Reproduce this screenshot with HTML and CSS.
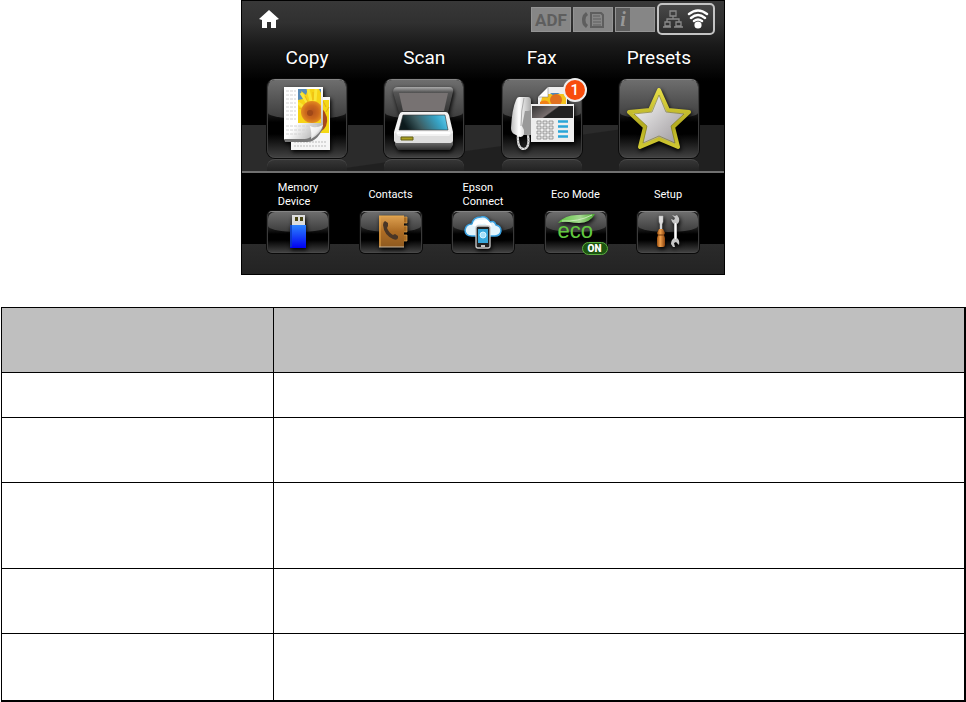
FILE: index.html
```
<!DOCTYPE html>
<html lang="en">
<head>
    <meta charset="UTF-8">
    <meta name="viewport" content="width=device-width, initial-scale=1.0">
    <title>Home Screen</title>
    <link rel="stylesheet" href="styles.css">
</head>
<body>
    <main class="screen">
        <header class="top-bar">
            <a href="#home" class="home-link" aria-label="Home">
                <svg width="22" height="20" viewBox="0 0 22 20">
                    <path d="M11 1 L21 10 L18 11 V19 H13 V13 H9 V19 H4 V11 L1 10 Z" fill="#fff"/>
                </svg>
            </a>
            <div class="status">
                <span class="status-box adf">ADF</span>
                <span class="status-box">
                    <svg width="24" height="18" viewBox="0 0 24 18" fill="none" stroke="#5e5e5e">
                        <path d="M5 1 L2 4 Q0 9 2 14 L5 17 L7 14 L5 12 Q4 9 5 6 L7 4 Z" fill="#5e5e5e" stroke="none"/>
                        <path d="M10 2 H20 L22 4 V16 H10 Z" stroke-width="2"/>
                        <path d="M12 5 H19 M12 8 H20 M12 11 H20 M12 14 H20" stroke-width="1.2"/>
                    </svg>
                </span>
                <span class="status-box info"><i>i</i></span>
                <button type="button" class="network" aria-label="Network">
                    <svg width="20" height="20" viewBox="0 0 20 20" fill="none" stroke="#8a8a8a" stroke-width="1.3">
                        <path d="M7 2 H13 V7 H7 Z M2 13 H7 V17 H2 Z M13 13 H18 V17 H13 Z M10 7 V10 M4 13 V10 H16 V13 M0 18 H8 M11 18 H20"/>
                    </svg>
                    <svg width="22" height="20" viewBox="0 0 22 20" fill="none" stroke="#fff" stroke-width="2.4" stroke-linecap="round">
                        <path d="M2 5 Q11 -2 20 5 M4 9 Q11 3 18 9 M7 12 Q11 9 15 12"/>
                        <circle cx="11" cy="16" r="3.6" fill="#fff" stroke="none"/>
                    </svg>
                </button>
            </div>
        </header>

        <nav class="main-menu">
            <div class="item">
                <label for="copy">Copy</label>
                <button type="button" class="tile" id="copy">
                    <svg width="80" height="78" viewBox="0 0 80 78">
                        <defs>
                            <linearGradient id="paper" x1="0" y1="0" x2="1" y2="1">
                                <stop offset="0.5" stop-color="#fff"/>
                                <stop offset="1" stop-color="#999"/>
                            </linearGradient>
                            <linearGradient id="curl" x1="0" y1="0" x2="1" y2="1">
                                <stop offset="0" stop-color="#fff"/>
                                <stop offset="0.5" stop-color="#eee"/>
                                <stop offset="1" stop-color="#555"/>
                            </linearGradient>
                            <radialGradient id="seeds">
                                <stop offset="0" stop-color="#b0501c"/>
                                <stop offset="0.6" stop-color="#cc681c"/>
                                <stop offset="1" stop-color="#e48c20"/>
                            </radialGradient>
                            <clipPath id="photo"><path d="M31 10 H54 V44 H31 Z"/></clipPath>
                        </defs>
                        <path d="M24 18 H63 V71 H24 Z" fill="#f6f6f6"/>
                        <path d="M42 21 H62 V54 H42 Z" fill="#f4d814"/>
                        <path d="M54 28 Q63 38 59 47 Q56 53 48 54 V28 Z" fill="#a8481a"/>
                        <path d="M56 22 L59 28 M62 28 L59 33" fill="none" stroke="#e0a818"/>
                        <path d="M27 63 H60 M27 67 H60" stroke="#bbb" stroke-dasharray="2 1"/>
                        <path d="M17 8 H56 V47 L44 61 H17 Z" fill="url(#paper)"/>
                        <path d="M19 12 H29 M19 16 H29 M19 20 H29 M19 24 H29 M19 28 H29 M19 32 H29 M19 36 H29 M19 40 H29 M19 47 H50 M19 51 H43 M19 55 H40" stroke="#d2d2d2" stroke-dasharray="3 1"/>
                        <g clip-path="url(#photo)">
                            <path d="M31 10 H54 V44 H31 Z" fill="#f6d316"/>
                            <path d="M31 10 H41 L39 16 L34 12 L36 20 L31 21 Z" fill="#5a8cb8"/>
                            <path d="M52 10 H54 V14 Z" fill="#5a8cb8"/>
                            <path d="M41 10 L44 22 M34 14 L41 25 M31 24 L38 29 M49 10 L48 22" stroke="#fae638" stroke-width="3"/>
                            <path d="M38 17 L42 25 M46 13 L46 21 M32 29 L37 31" stroke="#ecb414"/>
                            <circle cx="45" cy="33" r="11" fill="url(#seeds)"/>
                            <circle cx="43" cy="34" r="3" fill="#a04818"/>
                        </g>
                        <path d="M17 60 H38 Q44 60 56 47 V49 Q50 63 40 63 H18 Z" fill="#777"/>
                        <path d="M44 60 Q45 55 43 47 Q48 50 56 46 Q54 55 44 60 Z" fill="url(#curl)"/>
                    </svg>
                </button>
            </div>
            <div class="item">
                <label for="scan">Scan</label>
                <button type="button" class="tile" id="scan">
                    <svg width="80" height="78" viewBox="0 0 80 78">
                        <defs>
                            <linearGradient id="lid" x1="0" y1="0" x2="0" y2="1">
                                <stop offset="0" stop-color="#aaa"/>
                                <stop offset="0.2" stop-color="#555"/>
                                <stop offset="1" stop-color="#333"/>
                            </linearGradient>
                            <linearGradient id="glass" x1="0" y1="0.6" x2="1" y2="0.4">
                                <stop offset="0.1" stop-color="#0c1a1c"/>
                                <stop offset="0.4" stop-color="#3d5d62"/>
                                <stop offset="0.8" stop-color="#37a5c8"/>
                                <stop offset="1" stop-color="#5cc8ea"/>
                            </linearGradient>
                            <linearGradient id="base" x1="0" y1="0" x2="0" y2="1">
                                <stop offset="0" stop-color="#888"/>
                                <stop offset="1" stop-color="#2c2c2c"/>
                            </linearGradient>
                        </defs>
                        <path d="M14 8 H65 Q70 8 69 13 L64 34 H15 L9 13 Q9 8 14 8 Z" fill="url(#lid)"/>
                        <path d="M15 14 H64 L60 32 H19 Z" fill="#777272"/>
                        <path d="M11 60 H69 V66 L66 71 H14 L11 66 Z" fill="url(#base)"/>
                        <path d="M18 33 H62 Q64 33 65 36 L69 53 V60 Q69 64 65 64 H14 Q10 64 10 60 V53 L15 36 Q16 33 18 33 Z" fill="#f2f2f2"/>
                        <path d="M11 53 L14 57 H65 L69 53 V60 Q69 64 65 64 H14 Q10 64 10 60 Z" fill="#dedede"/>
                        <path d="M19 36 H61 L64 51 H15 Z" fill="url(#glass)" stroke="#333" stroke-width="0.6"/>
                        <path d="M13 54 H66" stroke="#fff" stroke-width="2"/>
                        <path d="M17 58 H29 V61 H17 Z" fill="#aaa022" stroke="#656018"/>
                    </svg>
                </button>
            </div>
            <div class="item">
                <label for="fax">Fax</label>
                <button type="button" class="tile" id="fax">
                    <svg width="80" height="78" viewBox="0 0 80 78">
                        <defs>
                            <linearGradient id="handset" x1="0" y1="0" x2="1" y2="0">
                                <stop offset="0" stop-color="#bbb"/>
                                <stop offset="0.4" stop-color="#fff"/>
                                <stop offset="1" stop-color="#aaa"/>
                            </linearGradient>
                            <linearGradient id="lcd" x1="0" y1="0" x2="1" y2="0.4">
                                <stop offset="0" stop-color="#333"/>
                                <stop offset="0.55" stop-color="#776e6e"/>
                                <stop offset="0.6" stop-color="#222"/>
                                <stop offset="1" stop-color="#222"/>
                            </linearGradient>
                        </defs>
                        <path d="M46 8 H65 V26 H36 V18 Z" fill="#eee"/>
                        <path d="M41 15 H64 V26 H38 Z" fill="#f3c21c"/>
                        <path d="M48 14 H58 L52 17 Z" fill="#4b86bb"/>
                        <circle cx="54" cy="21" r="6" fill="#e07020"/>
                        <path d="M38 23 Q45 19 48 26 H38 Z" fill="#f08018"/>
                        <path d="M46 8 V18 H36 Z" fill="#fff" stroke="#777" stroke-width="0.5"/>
                        <path d="M20 26 H29 V56 H18 Z" fill="#999"/>
                        <path d="M16 55 Q15 70 22 70 Q28 69 26 56" fill="none" stroke="#ddd" stroke-width="2.2"/>
                        <path d="M16 55 Q15 70 22 70 Q28 69 26 56" fill="none" stroke="#aaa" stroke-width="2.2" stroke-dasharray="1 2"/>
                        <path d="M17 18 H26 Q29 18 29 22 V29 Q29 32 26 32 H23 L20 47 L22 51 V55 Q21 58 18 58 L12 55 Q9 53 9 49 Q10 30 14 21 Q15 18 17 18 Z" fill="url(#handset)"/>
                        <path d="M22 19 Q19 31 19 47" fill="none" stroke="#aaa"/>
                        <path d="M29 25 H72 V63 H29 Z" fill="#eee"/>
                        <path d="M30 27 H71 V39 H30 Z" fill="url(#lcd)"/>
                        <g fill="#e4e4e4" stroke="#888" stroke-width="0.8">
                            <path d="M35 42 h4 v3 h-4 Z M41 42 h4 v3 h-4 Z M47 42 h4 v3 h-4 Z"/>
                            <path d="M35 47 h4 v3 h-4 Z M41 47 h4 v3 h-4 Z M47 47 h4 v3 h-4 Z"/>
                            <path d="M35 52 h4 v3 h-4 Z M41 52 h4 v3 h-4 Z M47 52 h4 v3 h-4 Z"/>
                            <path d="M35 57 h4 v3 h-4 Z M41 57 h4 v3 h-4 Z M47 57 h4 v3 h-4 Z"/>
                        </g>
                        <path d="M56 42.5 H66 M56 47.5 H66 M56 52.5 H66 M56 57.5 H66" stroke="#2aa5d8" stroke-width="2.6"/>
                    </svg>
                    <span class="badge">1</span>
                </button>
            </div>
            <div class="item">
                <label for="presets">Presets</label>
                <button type="button" class="tile" id="presets">
                    <svg width="80" height="78" viewBox="0 0 80 78">
                        <defs>
                            <linearGradient id="star" x1="0" y1="0" x2="1" y2="1">
                                <stop offset="0.2" stop-color="#eee"/>
                                <stop offset="0.8" stop-color="#a9a5a8"/>
                            </linearGradient>
                            <linearGradient id="star-edge" x1="0" y1="0" x2="0" y2="1">
                                <stop offset="0" stop-color="#e4dc48"/>
                                <stop offset="0.6" stop-color="#b4ac20"/>
                                <stop offset="1" stop-color="#cfc732"/>
                            </linearGradient>
                        </defs>
                        <path d="M40 11 L49 31 L70 33 L54 48 L59 68 L40 60 L21 68 L26 48 L10 33 L31 31 Z" fill="url(#star)" stroke="url(#star-edge)" stroke-width="4" stroke-linejoin="round"/>
                        <path d="M40 16 L47 33 L65 35 L52 47 L56 64 L40 57 L24 64 L28 47 L15 35 L33 33 Z" fill="none" stroke="#77721c" stroke-width="0.6"/>
                    </svg>
                </button>
            </div>
        </nav>

        <nav class="sub-menu">
            <div class="item">
                <label for="memory">Memory<br>Device</label>
                <button type="button" class="tile" id="memory">
                    <svg width="62" height="42" viewBox="0 0 62 42">
                        <defs>
                            <linearGradient id="usb" x1="0" y1="0" x2="0" y2="1">
                                <stop offset="0" stop-color="#2c82ff"/>
                                <stop offset="1" stop-color="#0000f0"/>
                            </linearGradient>
                        </defs>
                        <path d="M25 4 H38 V15 H25 Z" fill="#ddd"/>
                        <path d="M28 6 h3 v4 h-3 Z M33 6 h3 v4 h-3 Z" fill="#4a4614"/>
                        <path d="M23 14 H39 V37 H23 Z" fill="url(#usb)"/>
                        <path d="M24 14 V36" stroke="#0a38b8" stroke-width="1.5"/>
                    </svg>
                </button>
            </div>
            <div class="item">
                <label for="contacts">Contacts</label>
                <button type="button" class="tile" id="contacts">
                    <svg width="62" height="42" viewBox="0 0 62 42">
                        <defs>
                            <linearGradient id="book" x1="0" y1="0" x2="0" y2="1">
                                <stop offset="0" stop-color="#dda050"/>
                                <stop offset="0.5" stop-color="#ad6c24"/>
                                <stop offset="1" stop-color="#8e5a20"/>
                            </linearGradient>
                        </defs>
                        <path d="M43 6 h4 v6 h-4 Z M43 15 h4 v6 h-4 Z M43 24 h4 v6 h-4 Z" fill="#a66a22" stroke="#e0a550" stroke-width="0.7"/>
                        <path d="M19 5 H44 V36 H19 Z" fill="url(#book)"/>
                        <path d="M19 5 H44 M20 5 V36" stroke="#e9a94a"/>
                        <path d="M19 36 H44" stroke="#c9b8a0"/>
                        <path d="M25 10 L28 12 L28 15 L27 17 Q29 22 33 24 L35 23 L38 25 V27 Q37 30 33 28 Q24 24 23 14 Q23 11 25 10 Z" fill="#4a3626"/>
                    </svg>
                </button>
            </div>
            <div class="item">
                <label for="connect">Epson<br>Connect</label>
                <button type="button" class="tile" id="connect">
                    <svg width="62" height="42" viewBox="0 0 62 42">
                        <path d="M20 25 Q13 25 13 19 Q14 13 20 13 Q21 6 29 6 Q35 5 38 11 Q42 9 44 14 Q49 15 49 20 Q48 25 43 25 Z" fill="#e2f4fc" stroke="#3aa0df" stroke-width="1.5"/>
                        <path d="M22 15 Q24 10 30 11 Q36 9 38 16" fill="none" stroke="#fff" stroke-width="4"/>
                        <rect x="24" y="15" width="14" height="22" rx="2" fill="#222" stroke="#ccc" stroke-width="1.3"/>
                        <path d="M26 18 H36 V32 H26 Z" fill="#37a8dc"/>
                        <circle cx="31" cy="24" r="3" fill="#a4e0fa" stroke="#d8f4ff"/>
                        <path d="M29 35 H33" stroke="#fff" stroke-width="1.5"/>
                    </svg>
                </button>
            </div>
            <div class="item">
                <label for="eco">Eco Mode</label>
                <button type="button" class="tile" id="eco">
                    <svg width="62" height="42" viewBox="0 0 62 42">
                        <defs>
                            <linearGradient id="leaf" x1="0" y1="0" x2="1" y2="0">
                                <stop offset="0" stop-color="#5cc83c"/>
                                <stop offset="0.6" stop-color="#a4d890"/>
                                <stop offset="1" stop-color="#48a82c"/>
                            </linearGradient>
                        </defs>
                        <path d="M13 12 Q20 4 32 4 L50 3 Q45 12 34 12 Q28 12 24 11 Q18 10 13 12 Z" fill="url(#leaf)"/>
                        <path d="M17 10 Q33 11 47 4" fill="none" stroke="#d8f0cc" stroke-width="0.8"/>
                    </svg>
                    <span class="eco-text">eco</span>
                    <span class="eco-on">ON</span>
                </button>
            </div>
            <div class="item">
                <label for="setup">Setup</label>
                <button type="button" class="tile" id="setup">
                    <svg width="62" height="42" viewBox="0 0 62 42">
                        <defs>
                            <linearGradient id="handle" x1="0" y1="0" x2="1" y2="0">
                                <stop offset="0" stop-color="#9c5010"/>
                                <stop offset="0.4" stop-color="#f0a04c"/>
                                <stop offset="1" stop-color="#8a420c"/>
                            </linearGradient>
                        </defs>
                        <path d="M22 5 H26 V11 L25 13 V19 H23 V13 L22 11 Z" fill="#ddd" stroke="#bbb" stroke-width="0.5"/>
                        <path d="M22 18 H26 L28 22 L27 24 L28 27 V34 Q28 36 26 36 H22 Q20 36 20 34 V27 L21 24 L20 22 Z" fill="url(#handle)"/>
                        <path d="M21 24 H27" stroke="#6c360c"/>
                        <path d="M35 4 L38 7 L37 9 L34 8 Q35 12 37 13 V27 Q34 29 34 33 L36 36 H38 L37 32 L39 31 L42 34 Q43 29 40 27 V13 Q43 11 42 7 L40 4 L38 5 Z" fill="#c6c6c6"/>
                        <path d="M38.5 12 V28" stroke="#fff"/>
                    </svg>
                </button>
            </div>
        </nav>
    </main>

    <table class="functions">
        <thead>
            <tr><th></th><th></th></tr>
        </thead>
        <tbody>
            <tr class="row-short"><td></td><td></td></tr>
            <tr><td></td><td></td></tr>
            <tr class="row-tall"><td></td><td></td></tr>
            <tr><td></td><td></td></tr>
            <tr class="row-last"><td></td><td></td></tr>
        </tbody>
    </table>
</body>
</html>
```

FILE: styles.css
```
* {
    margin: 0;
    padding: 0;
    box-sizing: border-box;
}

body {
    background-color: #fff;
    font-family: Roboto, "Liberation Sans", sans-serif;
}

.screen {
    max-width: 484px;
    margin: 0 auto 32px;
    border: 1px solid #000;
    background-color: #000;
    color: #fff;
}

.top-bar {
    display: flex;
    justify-content: space-between;
    align-items: flex-start;
    height: 44px;
    padding: 2px 9px 0 16px;
    background: linear-gradient(#383838, #303030 50%, #1a1a1a);
}

.home-link {
    padding-top: 6px;
}

.home-link svg {
    display: block;
}

.status {
    display: flex;
    gap: 2px;
}

.status-box {
    display: flex;
    align-items: center;
    justify-content: center;
    width: 40px;
    height: 25px;
    margin-top: 4px;
    border: 1px solid #949494;
    background-color: #868686;
    color: #5e5e5e;
}

.adf {
    font-size: 17px;
    font-weight: 700;
}

.info {
    justify-content: flex-start;
}

.info i {
    width: 14px;
    background-color: #5e5e5e;
    color: #999;
    font-family: "Liberation Serif", serif;
    font-size: 20px;
    font-weight: 700;
    line-height: 23px;
    text-align: center;
}

.network {
    display: flex;
    align-items: center;
    justify-content: center;
    gap: 4px;
    width: 58px;
    height: 32px;
    border: 2px solid #c4c4c4;
    border-radius: 5px;
    background: linear-gradient(#484848, #2c2c2c);
    cursor: pointer;
}

.main-menu,
.sub-menu {
    display: flex;
    justify-content: space-between;
    padding: 0 25px;
}

.main-menu {
    height: 128px;
    border-bottom: 2px solid #707070;
    background:
        linear-gradient(172deg, #2b2b2b 50%, #202020 51%) 0 bottom / 100% 46px no-repeat,
        linear-gradient(#1a1a1a, #000 36px);
    overflow: hidden;
}

.item {
    display: flex;
    flex-direction: column;
    align-items: center;
}

.main-menu .item {
    width: 80px;
}

.main-menu label {
    height: 35px;
    font-size: 19px;
    line-height: 25px;
    text-shadow: 0 0 2px #000;
}

.sub-menu {
    height: 101px;
    padding-top: 5px;
    background: linear-gradient(#2b2b2b, #232323) 0 bottom / 100% 30px no-repeat;
}

.sub-menu .item {
    width: 62px;
}

.sub-menu label {
    display: flex;
    align-items: center;
    height: 33px;
    font-size: 11px;
    line-height: 14px;
    white-space: nowrap;
}

.tile {
    position: relative;
    flex: none;
    width: 100%;
    height: 79px;
    border: 1px solid #555;
    border-color: #858585 #3a3a3a #484848;
    border-radius: 8px;
    background: linear-gradient(#1c1c1c 42%, #000 55%, #000 70%, #404040);
    box-shadow: 0 0 0 1px #0a0a0a;
    color: #fff;
    font-family: inherit;
    cursor: pointer;
}

/* glossy upper half */
.tile::before {
    content: "";
    position: absolute;
    inset: 0 0 50%;
    border-radius: 7px 7px 50% 50% / 7px 7px 6px 6px;
    background: linear-gradient(#6e6e6e, #3c3c3c);
}

/* mirrored edge on the floor */
.main-menu .item::after {
    content: "";
    flex: none;
    width: 100%;
    height: 11px;
    margin-top: 1px;
    border-top: 1px solid #4a4a4a;
    border-radius: 8px 8px 0 0;
    background: linear-gradient(#363636, #222);
}

.sub-menu .tile {
    height: 42px;
    border-radius: 5px;
}

.tile svg {
    position: absolute;
    top: -1px;
    left: -1px;
    filter: drop-shadow(1px 2px 2px #000);
}

.badge {
    position: absolute;
    top: -2px;
    right: -6px;
    width: 24px;
    height: 24px;
    border: 2px solid #eee;
    border-radius: 50%;
    background-color: #f84c0c;
    font-size: 15px;
    font-weight: 500;
    line-height: 20px;
    text-align: center;
}

.eco-text {
    position: absolute;
    top: 7px;
    left: 12px;
    color: #62c840;
    font-family: "Liberation Sans", sans-serif;
    font-size: 22px;
    line-height: 24px;
}

.eco-on {
    position: absolute;
    right: -2px;
    bottom: -3px;
    width: 26px;
    height: 13px;
    border: 1px solid #5cb040;
    border-radius: 7px;
    background-color: #1d5610;
    font-size: 10px;
    font-weight: 900;
    line-height: 11px;
    text-align: center;
}

.functions {
    width: calc(100% - 1px);
    margin-left: 1px;
    border: 1px solid #000;
    border-right-width: 2px;
    border-bottom-width: 2px;
    border-spacing: 0;
    table-layout: fixed;
}

.functions th,
.functions td {
    height: 65px;
    border-bottom: 1px solid #000;
}

.functions th {
    background-color: #bfbfbf;
}

.functions th:first-child,
.functions td:first-child {
    width: 272px;
    border-right: 1px solid #000;
}

.functions .row-short td {
    height: 45px;
}

.functions .row-tall td {
    height: 86px;
}

.functions .row-last td {
    height: 66px;
    border-bottom: none;
}
```
